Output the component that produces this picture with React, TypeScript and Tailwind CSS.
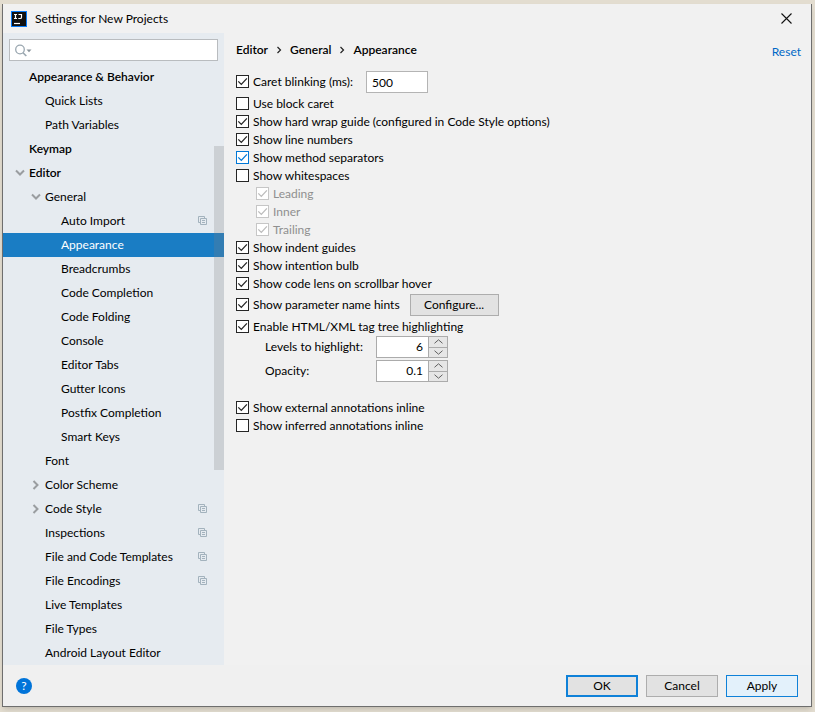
import { useState } from 'react'
import clsx from 'clsx'

type TreeItem = {
  label: string
  level: number
  bold?: boolean
  arrow?: 'open' | 'closed'
  perProject?: boolean
}

const treeItems: TreeItem[] = [
  { label: 'Appearance & Behavior', level: 0, bold: true },
  { label: 'Quick Lists', level: 1 },
  { label: 'Path Variables', level: 1 },
  { label: 'Keymap', level: 0, bold: true },
  { label: 'Editor', level: 0, bold: true, arrow: 'open' },
  { label: 'General', level: 1, arrow: 'open' },
  { label: 'Auto Import', level: 2, perProject: true },
  { label: 'Appearance', level: 2 },
  { label: 'Breadcrumbs', level: 2 },
  { label: 'Code Completion', level: 2 },
  { label: 'Code Folding', level: 2 },
  { label: 'Console', level: 2 },
  { label: 'Editor Tabs', level: 2 },
  { label: 'Gutter Icons', level: 2 },
  { label: 'Postfix Completion', level: 2 },
  { label: 'Smart Keys', level: 2 },
  { label: 'Font', level: 1 },
  { label: 'Color Scheme', level: 1, arrow: 'closed' },
  { label: 'Code Style', level: 1, arrow: 'closed', perProject: true },
  { label: 'Inspections', level: 1, perProject: true },
  { label: 'File and Code Templates', level: 1, perProject: true },
  { label: 'File Encodings', level: 1, perProject: true },
  { label: 'Live Templates', level: 1 },
  { label: 'File Types', level: 1 },
  { label: 'Android Layout Editor', level: 1 }
]

const indents = ['pl-3', 'pl-7', 'pl-11']

function Logo() {
  return (
    <svg width="16" height="16" viewBox="0 0 16 16" aria-hidden="true">
      <rect width="16" height="16" fill="#087cfa" />
      <rect x="1" y="1" width="14" height="14" fill="#111" />
      <path d="M3 3.5h3M4.5 3.5v4M3 7.5h3M7.5 3.5h3v2.7q0 1.3-1.3 1.3H7.3" fill="none" stroke="#fff" strokeWidth="1.2" />
      <path d="M3 12.5h6" stroke="#fff" strokeWidth="1.2" />
    </svg>
  )
}

function TreeArrow({ state }: { state: 'open' | 'closed' }) {
  return (
    <svg width="10" height="10" viewBox="0 0 10 10" fill="none" stroke="#9a9da0" strokeWidth="2" aria-hidden="true">
      <path d={state === 'open' ? 'M1 2.5l4 4 4-4' : 'M2.5 1l4 4-4 4'} />
    </svg>
  )
}

function CopyIcon() {
  return (
    <svg width="9" height="10" viewBox="0 0 9 10" fill="none" stroke="#a3b2bd" aria-hidden="true">
      <path d="M2 6.5H.5v-6h6V2" />
      <path d="M2.5 2.5h6v6h-6z" />
      <path d="M4 4.5h3M4 6.5h3" />
    </svg>
  )
}

type CheckProps = {
  label: string
  checked?: boolean
  disabled?: boolean
  active?: boolean
}

function Check({ label, checked = false, disabled = false, active = false }: CheckProps) {
  const [on, setOn] = useState(checked)
  return (
    <label className={clsx('flex h-[18px] items-center gap-1', disabled && 'ml-5 text-[#8f8f8f]')}>
      <span className="grid h-[14px] shrink-0 items-start">
        <input
          type="checkbox"
          checked={on}
          disabled={disabled}
          onChange={() => setOn(!on)}
          className={clsx(
            'col-start-1 row-start-1 size-[13px] appearance-none border bg-white',
            disabled ? 'border-[#c6c6c6]' : active ? 'border-[#0078d7]' : 'border-[#262626]'
          )}
        />
        {on && (
          <svg
            className="pointer-events-none col-start-1 row-start-1"
            width="13"
            height="13"
            viewBox="0 0 13 13"
            fill="none"
            stroke={disabled ? '#bcbcbc' : active ? '#0078d7' : '#262626'}
            strokeWidth="1.3"
            aria-hidden="true"
          >
            <path d="M2.3 6.4l3 3 5.6-6" />
          </svg>
        )}
      </span>
      {label}
    </label>
  )
}

function Spinner({ id, label, value }: { id: string; label: string; value: string }) {
  return (
    <div className="flex items-center">
      <label htmlFor={id} className="w-[111px]">
        {label}
      </label>
      <div className="flex h-[22px] w-[72px] border border-[#ababab] bg-white">
        <input id={id} type="text" defaultValue={value} className="w-full min-w-0 flex-1 pr-[5px] text-right outline-none" />
        <div className="flex w-[19px] flex-col divide-y divide-[#ababab] border-l border-[#ababab] bg-[#e6e6e6]">
          <button type="button" aria-label={`Increase ${label}`} className="flex flex-1 items-center justify-center">
            <svg width="9" height="5" viewBox="0 0 9 5" fill="none" stroke="#606060">
              <path d="M.5 4.3l4-3.5 4 3.5" />
            </svg>
          </button>
          <button type="button" aria-label={`Decrease ${label}`} className="flex flex-1 items-center justify-center">
            <svg width="9" height="5" viewBox="0 0 9 5" fill="none" stroke="#606060">
              <path d="M.5.7l4 3.5 4-3.5" />
            </svg>
          </button>
        </div>
      </div>
    </div>
  )
}

function Sidebar() {
  const [selected, setSelected] = useState('Appearance')
  return (
    <aside className="relative w-[221px] shrink-0 bg-[#e6ebf0]">
      <div className="px-[6px] pt-[6px] pb-1">
        <div className="flex h-[22px] items-center border border-[#b9bcbf] bg-white pl-[5px]">
          <svg width="17" height="13" viewBox="0 0 17 13" fill="none" stroke="#9aa7b0" strokeWidth="1.3" aria-hidden="true">
            <circle cx="5" cy="5.5" r="4.3" />
            <path d="M8 8.7l3.3 3.3" strokeWidth="1.6" />
            <path d="M11.5 5.5h5l-2.5 2.7z" fill="#8a949b" stroke="none" />
          </svg>
          <input type="text" aria-label="Search settings" className="min-w-0 flex-1 outline-none" />
        </div>
      </div>
      <ul>
        {treeItems.map((item) => (
          <li key={item.label}>
            <button
              type="button"
              onClick={() => setSelected(item.label)}
              className={clsx(
                'flex h-6 w-full items-center pr-[17px] text-left',
                indents[item.level],
                item.bold && 'font-semibold',
                selected === item.label && 'bg-[#1a7dc4] text-white'
              )}
            >
              <span className="w-[14px] shrink-0">{item.arrow && <TreeArrow state={item.arrow} />}</span>
              <span className="flex-1">{item.label}</span>
              {item.perProject && <CopyIcon />}
            </button>
          </li>
        ))}
      </ul>
      {/* Scrollbar thumb */}
      <div className="absolute top-[113px] right-0 h-[324px] w-[10px] bg-[#808080]/25"></div>
    </aside>
  )
}

function Crumbs() {
  const crumbs = ['Editor', 'General', 'Appearance']
  return (
    <nav className="flex items-center font-semibold">
      {crumbs.map((crumb, index) => (
        <span key={crumb} className="flex items-center">
          {index > 0 && (
            <svg className="mx-2" width="6" height="8" viewBox="0 0 6 8" fill="none" stroke="#222" strokeWidth="1.2">
              <path d="M1.5 1l3 3-3 3" />
            </svg>
          )}
          {crumb}
        </span>
      ))}
    </nav>
  )
}

export default function App() {
  return (
    <div className="flex min-h-screen bg-[#e3ddd0] pt-1 pr-[3px] pb-[5px] pl-[2px] font-['Lato','Open_Sans',sans-serif] text-[12px] leading-4 text-black">
      <div className="flex flex-1 flex-col border-r border-b border-l border-[#6e6e6e] bg-[#f1f1f1] shadow-md">
        <header className="flex h-[29px] items-center gap-2 pr-[19px] pl-2">
          <Logo />
          <h1 className="flex-1">Settings for New Projects</h1>
          <button type="button" aria-label="Close">
            <svg width="11" height="11" viewBox="0 0 11 11" stroke="#111" strokeWidth="1.1">
              <path d="M.5.5l10 10M10.5.5l-10 10" />
            </svg>
          </button>
        </header>

        <div className="flex flex-1">
          <Sidebar />

          <main className="flex-1 pt-[9px] pr-[10px] pl-3">
            <div className="flex h-[29px] items-start justify-between">
              <Crumbs />
              <a href="#reset" className="pt-[2px] text-[#0068c6]">
                Reset
              </a>
            </div>

            <div className="flex h-[22px] items-center gap-[13px]">
              <Check label="Caret blinking (ms):" checked />
              <input
                type="text"
                defaultValue="500"
                aria-label="Caret blinking (ms)"
                className="h-[22px] w-[62px] border border-[#b4b4b4] bg-white px-[5px] outline-none"
              />
            </div>
            <div className="mt-[2px]">
              <Check label="Use block caret" />
              <Check label="Show hard wrap guide (configured in Code Style options)" checked />
              <Check label="Show line numbers" checked />
              <Check label="Show method separators" checked active />
              <Check label="Show whitespaces" />
              <Check label="Leading" checked disabled />
              <Check label="Inner" checked disabled />
              <Check label="Trailing" checked disabled />
              <Check label="Show indent guides" checked />
              <Check label="Show intention bulb" checked />
              <Check label="Show code lens on scrollbar hover" checked />
            </div>
            <div className="mt-px mb-[2px] flex items-center gap-[10px]">
              <Check label="Show parameter name hints" checked />
              <button type="button" className="h-[22px] w-[89px] border border-[#adadad] bg-[#e2e2e2] leading-none">
                Configure...
              </button>
            </div>
            <Check label="Enable HTML/XML tag tree highlighting" checked />
            <div className="flex flex-col gap-[2px] pl-[29px]">
              <Spinner id="levels" label="Levels to highlight:" value="6" />
              <Spinner id="opacity" label="Opacity:" value="0.1" />
            </div>
            <div className="mt-[17px]">
              <Check label="Show external annotations inline" checked />
              <Check label="Show inferred annotations inline" />
            </div>
          </main>
        </div>

        <footer className="flex h-[41px] items-center gap-2 bg-[#f0f0f0] px-[13px]">
          <button type="button" aria-label="Help" className="mr-auto flex size-4 items-center justify-center rounded-full bg-[#0074d9] text-white">
            ?
          </button>
          <button type="button" className="h-[22px] w-[72px] border-2 border-[#0f81d8] bg-[#e2e2e2] leading-none">
            OK
          </button>
          <button type="button" className="h-[22px] w-[72px] border border-[#adadad] bg-[#e2e2e2] leading-none">
            Cancel
          </button>
          <button type="button" className="h-[22px] w-[72px] border border-[#0f81d8] bg-[#e3f1fb] leading-none">
            Apply
          </button>
        </footer>
      </div>
    </div>
  )
}
